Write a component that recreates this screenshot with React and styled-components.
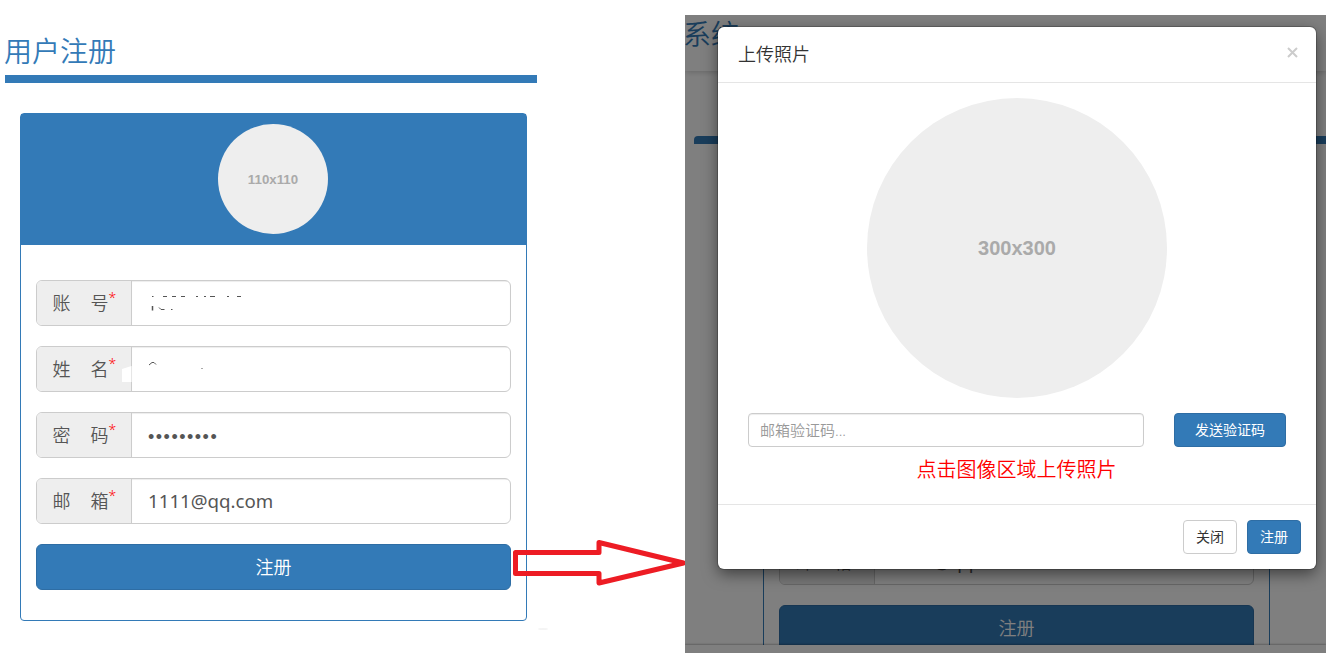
import React from 'react';
import styled, { createGlobalStyle, css } from 'styled-components';

const blue = '#337ab7';

const GlobalStyle = createGlobalStyle`
  * { box-sizing: border-box; }
  body {
    margin: 0;
    background: #fff;
    color: #333;
    font-family: "Noto Sans", "Noto Sans CJK SC", sans-serif;
    font-size: 14px;
    overflow: hidden;
  }
`;

const Page = styled.main`
  position: relative;
  display: flex;
  width: 1326px;
  height: 657px;
  overflow: hidden;
`;

const RegisterPane = styled.section`
  width: 685px;
  padding: 30px 0 0 5px;
`;

const Title = styled.h1`
  margin: 0 0 0 -1px;
  height: 45px;
  line-height: 40px;
  font-family: "Noto Sans CJK SC", sans-serif;
  font-size: 28px;
  font-weight: 350;
  color: ${blue};
`;

const Rule = styled.div`
  width: ${(p) => p.$width}px;
  height: 8px;
  background: ${blue};
  border-top-left-radius: ${(p) => (p.$rounded ? 4 : 0)}px;
`;

const Card = styled.div`
  width: 507px;
  height: 508px;
  margin: 30px 0 0 ${(p) => p.$indent}px;
  border: 1px solid ${blue};
  border-radius: 4px;
  background: #fff;
`;

const CardHead = styled.div`
  height: 131px;
  padding: 10px 1px 0 0;
  display: flex;
  justify-content: center;
  align-items: flex-start;
  background: ${blue};
`;

const Placeholder = styled.div`
  display: flex;
  align-items: center;
  justify-content: center;
  width: ${(p) => p.$size}px;
  height: ${(p) => p.$size}px;
  border-radius: 50%;
  background: #eee;
  color: #aaa;
  font: bold ${(p) => p.$font}px "Liberation Sans", sans-serif;
`;

const Form = styled.div`
  display: flex;
  flex-direction: column;
  gap: 20px;
  padding: 35px 15px 0;
`;

const Group = styled.div`
  display: flex;
  height: 46px;
  border: 1px solid #ccc;
  border-radius: 6px;
  overflow: hidden;
  background: #fff;
`;

const Addon = styled.label`
  display: flex;
  align-items: center;
  gap: 20px;
  width: 95px;
  padding: 0 0 2px 15.5px;
  background: #eee;
  border-right: 1px solid #ccc;
  color: #555;
  font: 350 18px "Noto Sans CJK SC", sans-serif;
`;

const Star = styled.sup`
  align-self: flex-start;
  margin: 7px 0 0 -20px;
  font: 300 14px/20px "Noto Sans", sans-serif;
  color: #f00;
`;

const Value = styled.div`
  position: relative;
  flex: 1;
  padding-left: 16px;
  line-height: 43px;
  font-size: 18.7px;
  color: #555;
  box-shadow: inset 0 1px 1px rgba(0, 0, 0, 0.075);
  ${(p) => p.$secret && css`
    line-height: 48px;
    font-family: "Liberation Sans", sans-serif;
    font-size: 18px;
    letter-spacing: 1.5px;
  `}
`;

const Marks = styled.svg`
  position: absolute;
  left: -10px;
  top: 0;
`;

const Button = styled.button`
  padding: 0 0 2px;
  width: ${(p) => p.$width || 54}px;
  height: ${(p) => (p.$large ? 46 : 34)}px;
  border: 1px solid ${(p) => (p.$plain ? '#ccc' : '#2e6da4')};
  border-radius: ${(p) => (p.$large ? 6 : 4)}px;
  background: ${(p) => (p.$plain ? '#fff' : blue)};
  color: ${(p) => (p.$plain ? '#333' : '#fff')};
  font: ${(p) => (p.$large ? '350 18px' : '14px')} "Noto Sans CJK SC", sans-serif;
`;

const ModalPane = styled.section`
  position: relative;
  width: 641px;
  height: 638px;
  margin-top: 15px;
  overflow: hidden;
  background: #fff;
`;

const SiteHeader = styled.header`
  height: 56px;
  margin-bottom: 65px;
  font: 350 28px/37px "Noto Sans CJK SC", sans-serif;
  color: ${blue};
  text-indent: -2px;
  box-shadow: 0 1px 6px rgba(0, 0, 0, 0.2);
`;

const Under = styled.div`
  padding-left: 9px;
`;

const SiteFooter = styled.footer`
  position: absolute;
  left: 0;
  right: 0;
  bottom: 0;
  height: 8px;
  background: #fff;
  box-shadow: 0 -1px 2px rgba(0, 0, 0, 0.25);
`;

const Backdrop = styled.div`
  position: absolute;
  inset: 0;
  background: rgba(0, 0, 0, 0.5);
`;

const Dialog = styled.div`
  position: absolute;
  left: 33px;
  top: 12px;
  width: 598px;
  height: 542px;
  display: flex;
  flex-direction: column;
  background: #fff;
  border-radius: 6px;
  box-shadow: 0 0 0 1px rgba(0, 0, 0, 0.2), 0 5px 15px rgba(0, 0, 0, 0.5);
`;

const DialogHead = styled.div`
  display: flex;
  justify-content: space-between;
  align-items: center;
  height: 56px;
  padding: 0 18px 4px 20px;
  border-bottom: 1px solid #e5e5e5;
  font: 350 18px "Noto Sans CJK SC", sans-serif;
`;

const Close = styled.svg`
  margin-bottom: 1px;
`;

const DialogBody = styled.div`
  flex: 1;
  display: flex;
  flex-direction: column;
  align-items: center;
  padding-top: 15px;
`;

const CodeRow = styled.div`
  display: flex;
  justify-content: space-between;
  width: 538px;
  margin-top: 15px;
`;

const CodeInput = styled.input`
  width: 396px;
  height: 34px;
  padding: 0 11px 1px;
  border: 1px solid #ccc;
  border-radius: 4px;
  box-shadow: inset 0 1px 1px rgba(0, 0, 0, 0.075);
  font: 350 15px "Noto Sans", "Noto Sans CJK SC", sans-serif;
  &::placeholder { color: #999; opacity: 1; }
`;

const Hint = styled.p`
  margin: 7px 1px 0 0;
  font: 350 20px/29px "Noto Sans CJK SC", sans-serif;
  color: #f00;
`;

const DialogFoot = styled.div`
  display: flex;
  justify-content: flex-end;
  gap: 10px;
  height: 65px;
  padding: 15px 15px 0;
  border-top: 1px solid #e5e5e5;
`;

const Arrow = styled.svg`
  position: absolute;
  left: 510px;
  top: 536px;
`;

const Smudge = styled.span`
  position: absolute;
  left: 538px;
  top: 628px;
  width: 10px;
  height: 2px;
  border-radius: 50%;
  background: #f4f4f4;
`;

function Field({ label, secret, children }) {
  return (
    <Group>
      <Addon>
        <span>{label[0]}</span>
        <span>{label[1]}</span>
        <Star>*</Star>
      </Addon>
      <Value $secret={secret}>{children}</Value>
    </Group>
  );
}

function RegisterCard({ indent, covered }) {
  return (
    <Card $indent={indent}>
      <CardHead>
        {!covered && <Placeholder $size={110} $font={13.3}>110x110</Placeholder>}
      </CardHead>
      <Form>
        <Field label="账号">
          {/* remains of the masked account number */}
          <Marks width="140" height="44" viewBox="0 0 140 44" fill="none" stroke="#555">
            <path d="M30 15.500h1.500M41 15.500h4M50 15.500h4M59 15.500h4M74 15.500h2M82 15.500h2M88 15.500h5M105 15.500h2M115 15.500h4" />
            <path d="M30.500 25v4.500" strokeWidth="1.500" />
            <path d="M37 26.500l2 2h3.500M49 28.500h1.500" />
          </Marks>
        </Field>
        <Field label="姓名">
          <Marks width="140" height="44" viewBox="0 0 140 44" fill="none" stroke="#555">
            <path d="M0 22L9.500 19v16H0z" fill="#fff" stroke="none" />
            <path d="M27 18l3-2.500h2l2 2M79.500 21.500h1" />
          </Marks>
        </Field>
        <Field label="密码" secret>•••••••••</Field>
        <Field label="邮箱">1111@qq.com</Field>
        <Button $large $width={475}>注册</Button>
      </Form>
    </Card>
  );
}

export default function App() {
  return (
    <Page>
      <GlobalStyle />
      <RegisterPane>
        <Title>用户注册</Title>
        <Rule $width={532} />
        <RegisterCard indent={15} />
      </RegisterPane>
      <ModalPane>
        <SiteHeader>系统</SiteHeader>
        <Under>
          <Rule $width={632} $rounded />
          <RegisterCard indent={69} covered />
        </Under>
        <SiteFooter />
        <Backdrop />
        <Dialog>
          <DialogHead>
            <span>上传照片</span>
            <Close width="11" height="11" viewBox="0 0 11 11" stroke="#ccc" strokeWidth="2">
              <path d="M1 1l9 9M10 1l-9 9" />
            </Close>
          </DialogHead>
          <DialogBody>
            <Placeholder $size={300} $font={20}>300x300</Placeholder>
            <CodeRow>
              <CodeInput placeholder="邮箱验证码..." />
              <Button $width={112}>发送验证码</Button>
            </CodeRow>
            <Hint>点击图像区域上传照片</Hint>
          </DialogBody>
          <DialogFoot>
            <Button $plain>关闭</Button>
            <Button>注册</Button>
          </DialogFoot>
        </Dialog>
      </ModalPane>
      <Arrow width="175" height="52" viewBox="0 0 175 52">
        <path d="M5.500 16.500H89V6.500L173.500 27L89 47V37.500H5.500z" fill="none" stroke="#ed1c24" strokeWidth="5" strokeLinejoin="round" />
      </Arrow>
      <Smudge />
    </Page>
  );
}
